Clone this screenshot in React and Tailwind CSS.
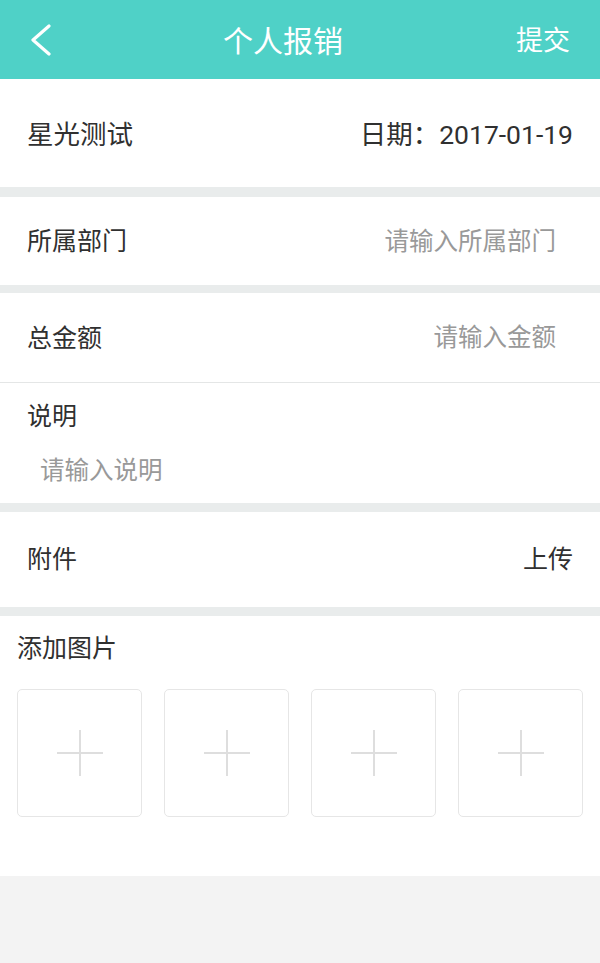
import React from "react";

const font = { fontFamily: 'Roboto, "Noto Sans CJK SC", sans-serif' };

function Plus() {
  return (
    <div className="w-[125px] h-[128px] rounded-[5px] border border-[#e6e6e6] flex items-center justify-center">
      <svg width="46" height="46" viewBox="0 0 46 46">
        <line x1="0" y1="23" x2="46" y2="23" stroke="#dedede" strokeWidth="2" />
        <line x1="23" y1="0" x2="23" y2="46" stroke="#dedede" strokeWidth="2" />
      </svg>
    </div>
  );
}

export default function App() {
  return (
    <div className="w-[600px] min-h-[963px] bg-[#f3f3f3]" style={font}>
      <div className="h-[79px] bg-[#4fd1c7] flex items-center justify-between pl-[28px] pr-[30px] relative">
        <svg width="22" height="32" viewBox="0 0 22 32" className="ml-[2px] mt-[1px]">
          <polyline points="19,2 3,16 19,30" fill="none" stroke="#fff" strokeWidth="3.2" strokeLinecap="round" strokeLinejoin="round" />
        </svg>
        <div className="absolute left-0 right-[34px] top-0 bottom-0 flex items-center justify-center pt-[3px] text-white text-[30px] pointer-events-none">个人报销</div>
        <div className="text-white text-[27px] pt-[3px]">提交</div>
      </div>

      <div className="h-[108px] bg-white flex items-center justify-between px-[27px] pt-[3px] text-[#303030] text-[26.5px]">
        <span>星光测试</span>
        <span>日期：2017-01-19</span>
      </div>
      <div className="h-[10px] bg-[#e9ecec]" />

      <div className="h-[88px] bg-white flex items-center justify-between pl-[27px] pr-[44px] pt-[2px] text-[25px]">
        <span className="text-[#303030]">所属部门</span>
        <span className="text-[#999] text-[24.5px]">请输入所属部门</span>
      </div>
      <div className="h-[8px] bg-[#e9ecec]" />

      <div className="h-[89px] bg-white flex items-center justify-between pl-[27px] pr-[44px] pt-[2px] text-[25px]">
        <span className="text-[#303030]">总金额</span>
        <span className="text-[#999] text-[24.5px]">请输入金额</span>
      </div>
      <div className="h-[1px] bg-[#e4e6e6]" />

      <div className="h-[120px] bg-white flex flex-col">
        <div className="h-[66px] flex items-center pl-[27px] pt-[2px] text-[25px] text-[#303030]">说明</div>
        <div className="h-[42px] flex items-center pl-[40px] pt-[2px] text-[24.5px] text-[#999]">请输入说明</div>
      </div>
      <div className="h-[9px] bg-[#e9ecec]" />

      <div className="h-[95px] bg-white flex items-center justify-between px-[27px] text-[25px] text-[#303030]">
        <span>附件</span>
        <span>上传</span>
      </div>
      <div className="h-[9px] bg-[#e9ecec]" />

      <div className="h-[260px] bg-white flex flex-col">
        <div className="h-[64px] flex items-center pl-[17px] pt-[1px] text-[25px] text-[#303030]">添加图片</div>
        <div className="mt-[9px] flex justify-between px-[17px]">
          <Plus />
          <Plus />
          <Plus />
          <Plus />
        </div>
      </div>
    </div>
  );
}
